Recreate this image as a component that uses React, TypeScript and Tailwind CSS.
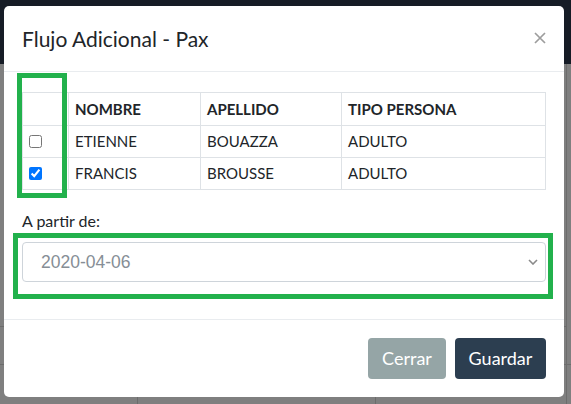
type Pax = {
  id: number;
  nombre: string;
  apellido: string;
  tipo: string;
  checked: boolean;
};

const pasajeros: Pax[] = [
  { id: 1, nombre: "ETIENNE", apellido: "BOUAZZA", tipo: "ADULTO", checked: false },
  { id: 2, nombre: "FRANCIS", apellido: "BROUSSE", tipo: "ADULTO", checked: true },
];

const cell = "flex items-center bg-white pl-[6px]";

function Backdrop() {
  return (
    <div className="flex h-full flex-col">
      <div className="h-[64px] bg-[#161c26]" />
      <div className="h-[262px] border-r border-[#6c6c6c] w-[567px]" />
      <div className="h-[38px] w-[567px] border-t border-r border-[#6c6c6c]" />
      <div className="grid flex-1 grid-cols-[138px_238px_191px_1fr] border-t border-[#6c6c6c]">
        <div className="border-r border-[#6c6c6c]" />
        <div className="border-r border-[#6c6c6c]" />
        <div className="border-r border-[#6c6c6c]" />
        <div />
      </div>
    </div>
  );
}

function CloseIcon() {
  return (
    <svg width="12" height="12" viewBox="0 0 12 12" aria-hidden>
      <path d="M1 1L11 11M11 1L1 11" stroke="#9d9d9d" strokeWidth="1.7" />
    </svg>
  );
}

function Chevron() {
  return (
    <svg width="10" height="6" viewBox="0 0 10 6" aria-hidden>
      <path d="M1 1l4 4 4-4" fill="none" stroke="#8a8a8a" strokeWidth="1.6" />
    </svg>
  );
}

export default function App() {
  return (
    <div className="relative h-[404px] w-[571px] overflow-hidden bg-[#7f7f7f] font-['Lato',sans-serif]">
      <Backdrop />

      <div className="absolute left-[4px] top-[6px] flex h-[391px] w-[560px] flex-col rounded-[5px] bg-white text-[#212529]">
        <div className="flex h-[66px] items-center justify-between border-b border-[#e9ecef] px-[18px] pb-px">
          <h5 className="text-[21px] leading-[33px]">Flujo Adicional - Pax</h5>
          <CloseIcon />
        </div>

        <div className="flex flex-col px-[18px] pt-[20px] pb-[37px]">
          <div className="grid w-[524px] grid-cols-[45px_131px_140px_203px] grid-rows-[32px_31px_31px] gap-px bg-[#dee2e6] p-px text-[15px]">
            <div className={cell} />
            <div className={`${cell} font-bold`}>NOMBRE</div>
            <div className={`${cell} font-bold`}>APELLIDO</div>
            <div className={`${cell} font-bold`}>TIPO PERSONA</div>
            {pasajeros.map((p) => (
              <div key={p.id} className="contents">
                <div className={cell}>
                  <input
                    type="checkbox"
                    defaultChecked={p.checked}
                    className="m-0 h-[13px] w-[13px]"
                  />
                </div>
                <div className={cell}>{p.nombre}</div>
                <div className={cell}>{p.apellido}</div>
                <div className={cell}>{p.tipo}</div>
              </div>
            ))}
          </div>

          <label className="mt-[19px] text-[16px] leading-[24px]">A partir de:</label>
          <div className="mt-[9px] flex h-[40px] items-center justify-between rounded-[4px] border border-[#ced4da] pl-[18px] pr-[7px] font-['Liberation_Sans',sans-serif] text-[17.5px] text-[#868e96]">
            <span>2020-04-06</span>
            <Chevron />
          </div>
        </div>

        <div className="flex justify-end gap-[9px] border-t border-[#e9ecef] px-[18px] pt-[18px] pb-[18px]">
          <button className="h-[41px] w-[78px] rounded-[4px] bg-[#95a5a6] text-[18px] text-white">
            Cerrar
          </button>
          <button className="h-[41px] w-[91px] rounded-[4px] bg-[#2c3e50] text-[18px] text-white">
            Guardar
          </button>
        </div>

        <div className="absolute left-[13px] top-[67px] h-[125px] w-[50px] border-[5px] border-[#22b14c]" />
        <div className="absolute left-[9px] top-[227px] h-[66px] w-[540px] border-[5px] border-[#22b14c]" />
      </div>
    </div>
  );
}
